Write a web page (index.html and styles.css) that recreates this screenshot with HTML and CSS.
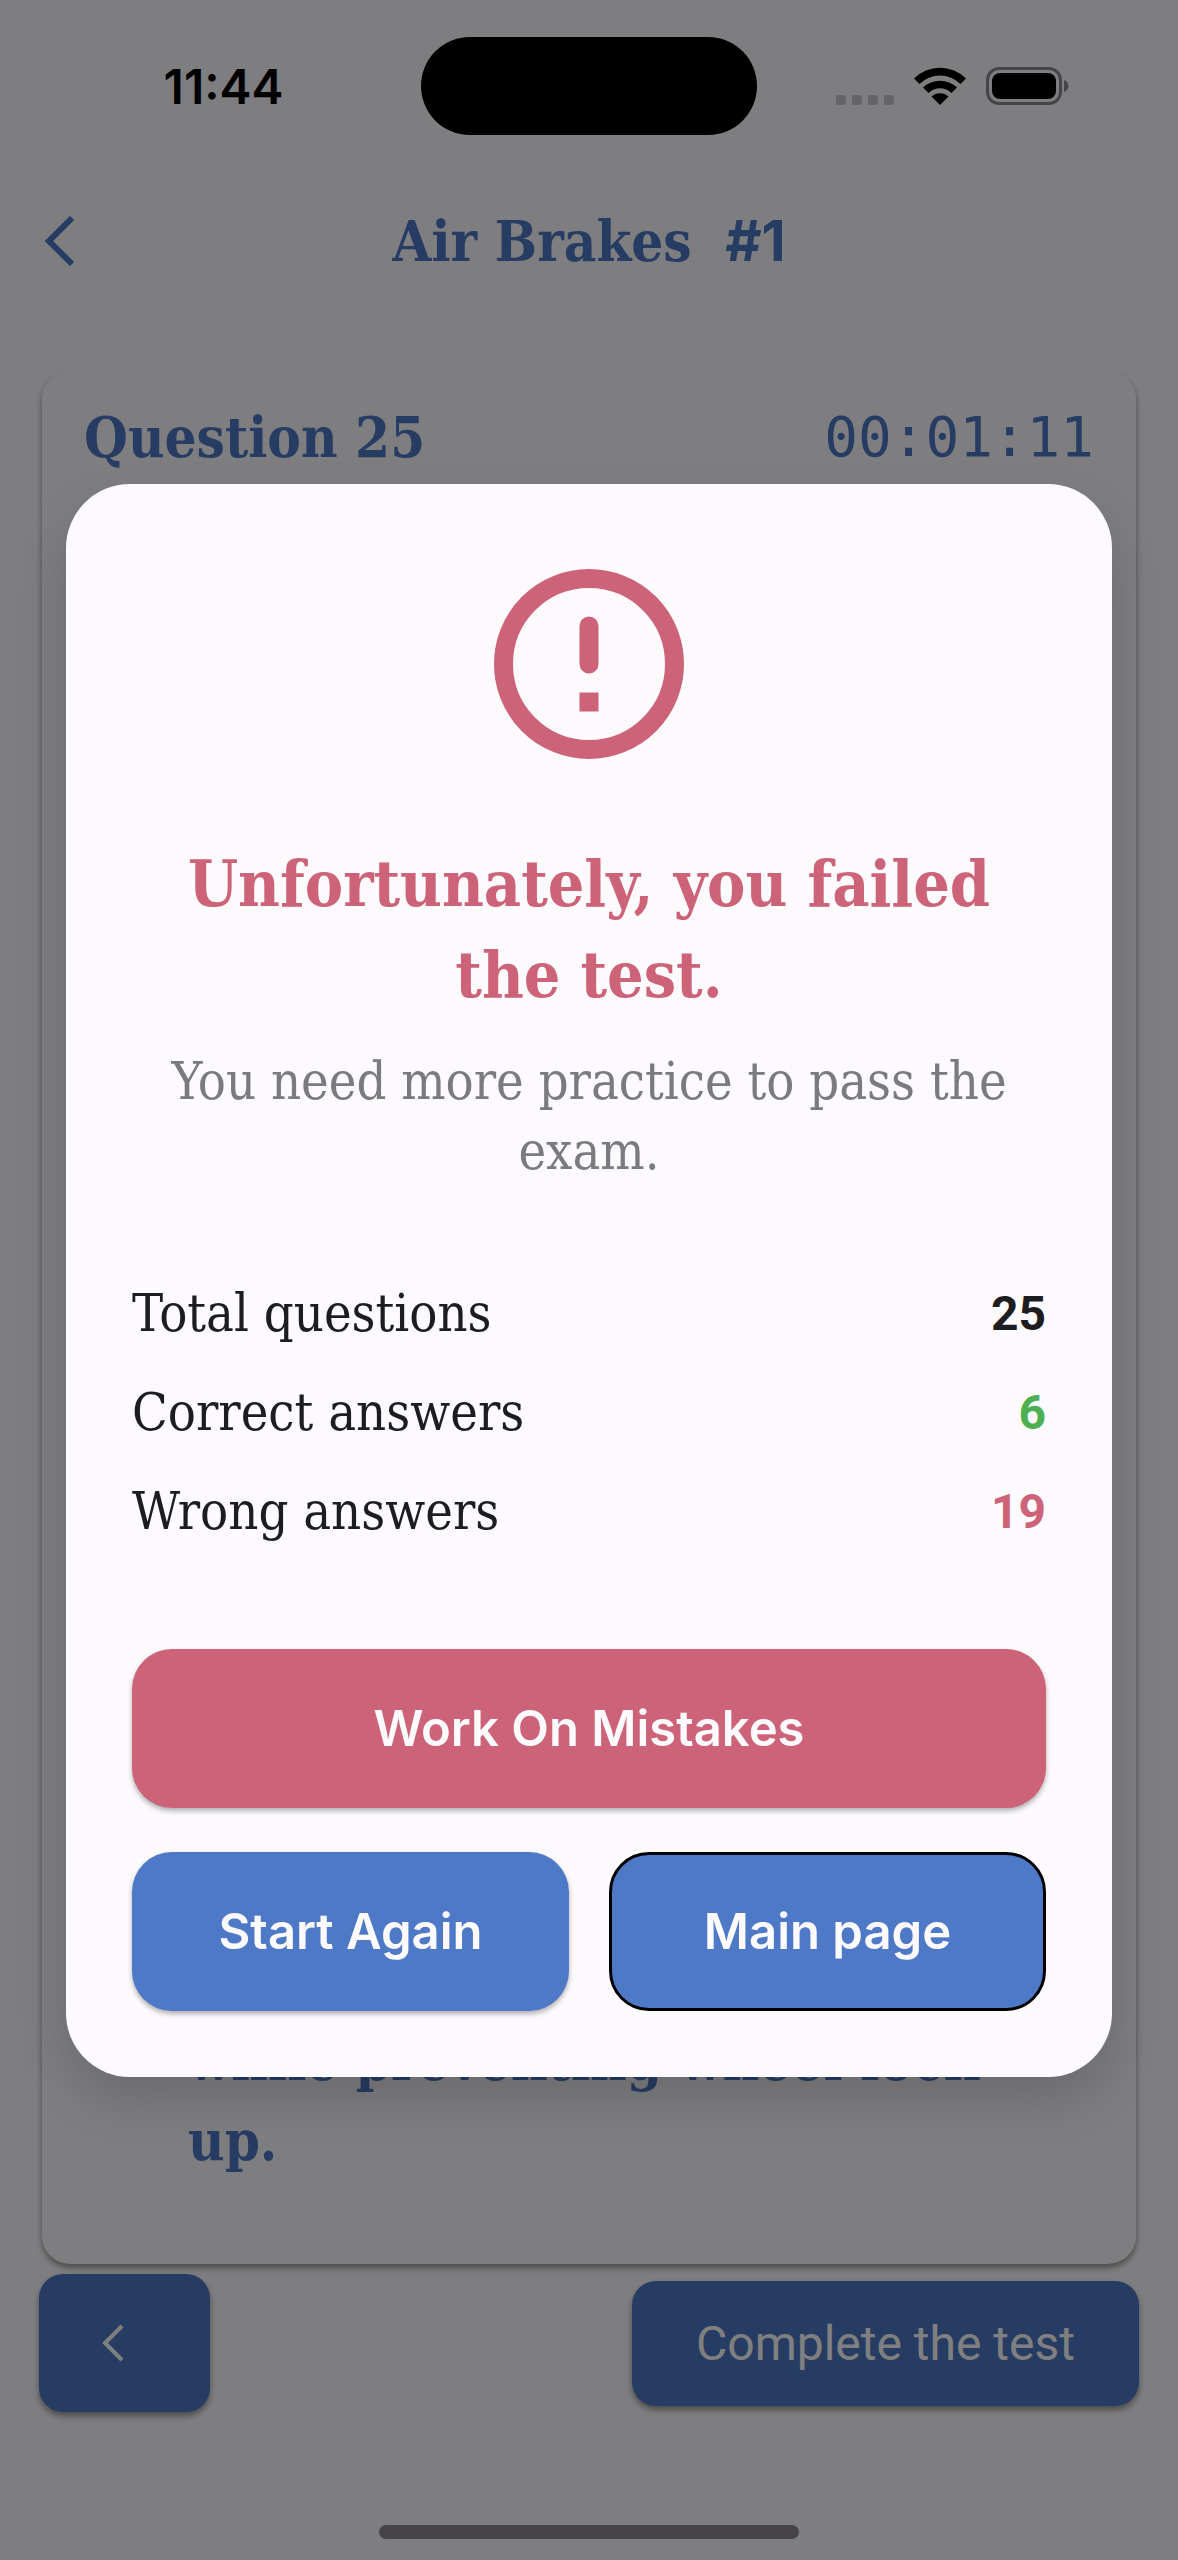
FILE: index.html
```html
<!DOCTYPE html>
<html lang="en">
<head>
    <meta charset="UTF-8">
    <meta name="viewport" content="width=device-width, initial-scale=1">
    <title>Air Brakes #1</title>
    <link rel="stylesheet" href="styles.css">
</head>
<body>
    <div class="screen">
        <div class="status-bar">
            <div class="time">11:44</div>
            <div class="island"></div>
            <div class="status-icons">
                <svg class="dots" viewBox="0 0 58 10">
                    <rect width="10" height="10" rx="3"/>
                    <rect x="16" width="10" height="10" rx="3"/>
                    <rect x="32" width="10" height="10" rx="3"/>
                    <rect x="48" width="10" height="10" rx="3"/>
                </svg>
                <svg class="wifi" viewBox="0 0 52 38">
                    <path d="M0 11.500A37 37 0 0 1 52 11.500L46.500 17A29 29 0 0 0 5.500 17Z"/>
                    <path d="M9 20.500A24.500 24.500 0 0 1 43 20.500L37.500 26A16.500 16.500 0 0 0 14.500 26Z"/>
                    <path d="M17.500 29.500A12.500 12.500 0 0 1 34.500 29.500L26 38Z"/>
                </svg>
                <svg class="battery" viewBox="0 0 84 38">
                    <rect x="1.500" y="1.500" width="73" height="35" rx="11.500" fill="none" stroke="#8c888e" stroke-width="3"/>
                    <rect x="6" y="6" width="64" height="26" rx="8"/>
                    <path d="M78 13C84 15 84 23 78 25Z" fill="#8c888e"/>
                </svg>
            </div>
        </div>

        <header class="header">
            <button class="back" aria-label="Back">
                <svg viewBox="0 0 30 50"><path d="M28 2L5 25L28 48"/></svg>
            </button>
            <h1>Air Brakes <span>#1</span></h1>
        </header>

        <main class="card">
            <div class="card-head">
                <h2>Question 25</h2>
                <div class="timer">00:01:11</div>
            </div>
            <p class="answer">while preventing wheel lock<br>up.</p>
        </main>

        <footer class="footer">
            <button class="prev" aria-label="Previous question">
                <svg viewBox="0 0 24 38"><path d="M21 2L4 19L21 36"/></svg>
            </button>
            <button class="complete">Complete the test</button>
        </footer>
        <div class="home-bar"></div>
    </div>

    <div class="overlay">
        <div class="modal" role="dialog" aria-labelledby="modalTitle">
            <svg class="alert-icon" viewBox="0 0 24 24">
                <circle cx="12" cy="12" r="9" fill="none" stroke="#cd6378" stroke-width="2"/>
                <rect x="11" y="7" width="2" height="6" rx="1"/>
                <rect x="11" y="15" width="2" height="2"/>
            </svg>
            <h2 id="modalTitle">Unfortunately, you failed the test.</h2>
            <p class="message">You need more practice to pass the exam.</p>

            <table class="stats">
                <tr><th scope="row">Total questions</th><td>25</td></tr>
                <tr><th scope="row">Correct answers</th><td class="correct">6</td></tr>
                <tr><th scope="row">Wrong answers</th><td class="wrong">19</td></tr>
            </table>

            <div class="actions">
                <button class="mistakes">Work On Mistakes</button>
                <button>Start Again</button>
                <button class="outlined">Main page</button>
            </div>
        </div>
    </div>
</body>
</html>
```
FILE: styles.css
```css
* {
    box-sizing: border-box;
}
body {
    margin: 0;
    background-color: #fdfbff;
    font-family: "DejaVu Serif Condensed", "DejaVu Serif", serif;
    color: #4d79c7;
}
h1, h2, p {
    margin: 0;
}
button {
    border: none;
    cursor: pointer;
}
.screen {
    display: flex;
    flex-direction: column;
    min-height: 100vh;
}

/* status bar */
.status-bar {
    display: grid;
    grid-template-columns: 1fr 336px 1fr;
    align-items: center;
    padding-top: 37px;
}
.time {
    padding-left: 26px;
    text-align: center;
    font-family: Inter, sans-serif;
    font-size: 48px;
    font-weight: 600;
    color: #000;
}
.island {
    height: 98px;
    border-radius: 49px;
    background-color: #000;
}
.status-icons {
    display: flex;
    justify-content: flex-end;
    align-items: flex-end;
    gap: 20px;
    padding-right: 108px;
}
.dots {
    width: 58px;
    height: 10px;
    fill: #ccc9ce;
}
.wifi {
    width: 52px;
    height: 38px;
}
.battery {
    width: 84px;
    height: 38px;
}

/* header */
.header {
    display: grid;
    grid-template-columns: 80px 1fr 80px;
    align-items: center;
    height: 100px;
    margin: 56px 0 80px;
}
.back {
    padding: 0 0 0 44px;
    background: none;
}
.back svg {
    display: block;
    width: 30px;
    height: 50px;
}
.back path {
    fill: none;
    stroke: #4d79c7;
    stroke-width: 6;
}
h1 {
    text-align: center;
    font-size: 56px;
    line-height: 80px;
}
h1 span {
    margin-left: 16px;
    font-family: Inter, sans-serif;
}

/* question card */
.card {
    flex: 1;
    display: flex;
    flex-direction: column;
    margin: 0 42px;
    padding: 26px 42px 84px;
    border-radius: 28px;
    box-shadow: 0 4px 6px rgba(0, 0, 0, 0.4);
    clip-path: inset(0 -12px -16px);
}
.card-head {
    display: flex;
    justify-content: space-between;
    align-items: center;
    line-height: 80px;
}
.card-head h2 {
    font-size: 56px;
}
.timer {
    font-family: "DejaVu Sans Mono", monospace;
    font-size: 56px;
}
.answer {
    margin-top: auto;
    padding-left: 104px;
    font-size: 56px;
    font-weight: bold;
    line-height: 80px;
}

/* bottom buttons */
.footer {
    display: flex;
    justify-content: space-between;
    align-items: center;
    margin: 10px 39px 0;
}
.footer button {
    border-radius: 24px;
    background-color: #4d79c7;
    box-shadow: 0 4px 6px rgba(0, 0, 0, 0.4);
}
.prev {
    width: 171px;
    height: 138px;
    padding: 0 0 0 62px;
}
.prev svg {
    display: block;
    width: 24px;
    height: 38px;
}
.prev path {
    fill: none;
    stroke: #fff;
    stroke-width: 4;
}
.complete {
    height: 125px;
    padding: 0 64px;
    font-family: Roboto, sans-serif;
    font-size: 48px;
    color: #fff;
}
.home-bar {
    width: 420px;
    height: 14px;
    margin: 113px auto 21px;
    border-radius: 7px;
    background-color: #8c888e;
}

/* result dialog */
.overlay {
    position: absolute;
    inset: 0;
    display: flex;
    align-items: center;
    justify-content: center;
    padding: 0 66px;
    background-color: rgba(0, 0, 0, 0.5);
}
.modal {
    flex: 1;
    padding: 66px;
    border-radius: 64px;
    background-color: #fcfafd;
    box-shadow: 0 24px 50px rgba(0, 0, 0, 0.15);
    text-align: center;
}
.alert-icon {
    display: block;
    width: 228px;
    height: 228px;
    margin: 0 auto 60px;
    fill: #cd6378;
}
.modal h2 {
    font-size: 64px;
    line-height: 91px;
    color: #cd6378;
}
.message {
    margin: 26px 0 78px;
    font-size: 52px;
    line-height: 70px;
    color: #7b7a7d;
}
.stats {
    width: 100%;
    border-collapse: collapse;
    font-size: 52px;
    line-height: 99px;
    color: #1d1c20;
}
.stats th {
    padding: 0;
    text-align: left;
    font-weight: normal;
}
.stats td {
    padding: 0;
    text-align: right;
    font-family: Roboto, sans-serif;
    font-size: 48px;
    font-weight: bold;
}
.stats .correct {
    color: #4caf50;
}
.stats .wrong {
    color: #cd6378;
}
.actions {
    display: grid;
    grid-template-columns: 1fr 1fr;
    gap: 44px 40px;
    margin-top: 88px;
}
.actions button {
    height: 159px;
    border-radius: 40px;
    background-color: #4d79c7;
    box-shadow: 0 3px 5px rgba(0, 0, 0, 0.3);
    font-family: Inter, sans-serif;
    font-size: 49px;
    font-weight: 600;
    color: #fcfafd;
}
.actions .mistakes {
    grid-column: 1 / 3;
    background-color: #cd6378;
}
.actions .outlined {
    border: 3px solid #000;
    box-shadow: none;
}
```
